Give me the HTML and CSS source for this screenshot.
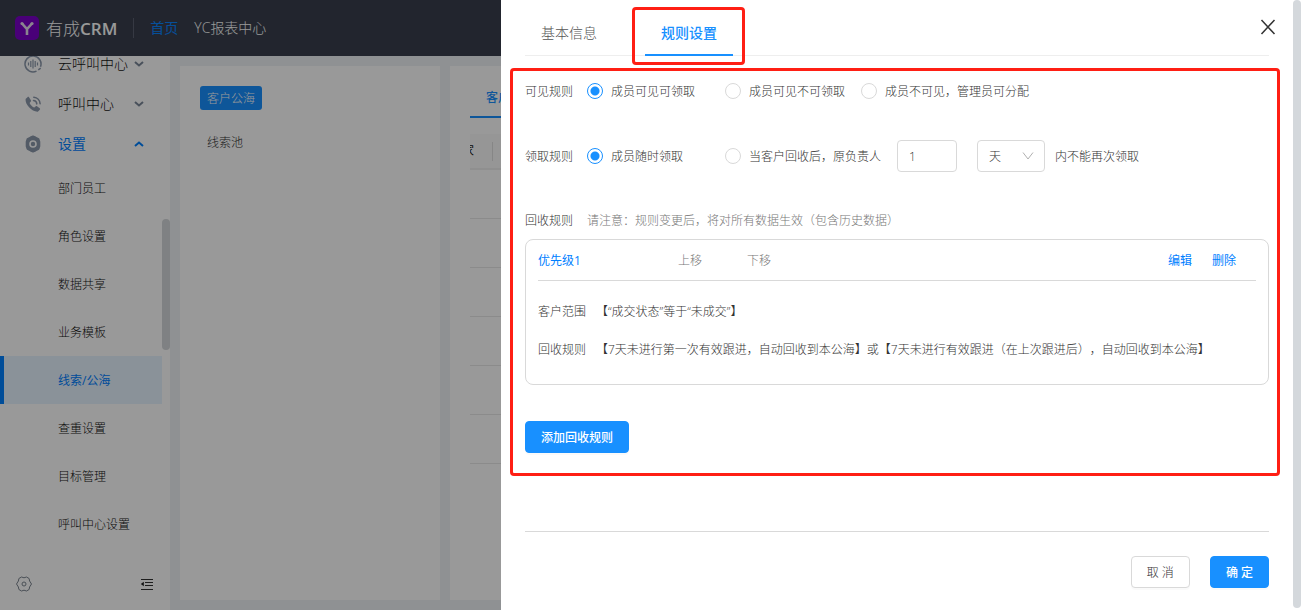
FILE: index.html
```html
<!DOCTYPE html>
<html lang="zh-CN">
<head>
<meta charset="utf-8">
<title>有成CRM</title>
<link rel="stylesheet" href="styles.css">
</head>
<body>
<div class="app">
  <header class="topbar">
    <svg class="logo" viewBox="0 0 24 24" width="24" height="24" aria-hidden="true"><rect width="24" height="24" rx="5" fill="#7a00c8"/><path d="M7 7.500l5 5.500 5-5.500M12 13v6" fill="none" stroke="#e6dcef" stroke-width="2.600"/><circle cx="7" cy="7.500" r="1.600" fill="#e6dcef"/><circle cx="17" cy="7.500" r="1.600" fill="#e6dcef"/></svg>
    <span class="brand">有成<b>CRM</b></span>
    <nav class="topnav">
      <a class="topnav-link is-active" href="#">首页</a>
      <a class="topnav-link" href="#">YC报表中心</a>
    </nav>
  </header>
  <div class="body">
    <aside class="sidebar">
      <nav class="menu">
        <a class="menu-item" href="#">
          <svg class="menu-icon" viewBox="0 0 18 18" width="18" height="18" fill="none" stroke="#8b98ab" stroke-width="1.500"><path d="M12.500 16.200A8 8 0 1 1 16.500 11.800M14.300 14.800l2.400-1.600"/><path d="M4.500 7.500v3M6.800 6v6M9 4.500v9M11.200 6v6M13.500 7.500v3" stroke-width="1.200"/></svg>
          <span>云呼叫中心</span>
          <svg class="chevron" viewBox="0 0 10 6" width="10" height="6"><path d="M1 1l4 3.500L9 1"/></svg>
        </a>
        <a class="menu-item" href="#">
          <svg class="menu-icon" viewBox="0 0 18 18" width="18" height="18"><path d="M3.500 2.200L1.600 4.100C.8 9.500 8 17 13.800 16.700l2-2c.5-.6.4-1-.1-1.400l-2.700-2c-.5-.3-1-.3-1.400.1l-1.300 1.200C8.500 11.900 6.400 9.700 5.600 7.900L6.800 6.600c.4-.5.4-.9.100-1.400L5 2.300c-.4-.6-1-.6-1.500-.1z" fill="#8b98ab"/><path d="M9.500 5.500a3.600 3.600 0 0 1 3.300 3.400M9.800 2.200a7 7 0 0 1 6.300 6.600" fill="none" stroke="#8b98ab" stroke-width="1.500" stroke-linecap="round"/></svg>
          <span>呼叫中心</span>
          <svg class="chevron" viewBox="0 0 10 6" width="10" height="6"><path d="M1 1l4 3.500L9 1"/></svg>
        </a>
        <a class="menu-item is-open" href="#">
          <svg class="menu-icon" viewBox="0 0 18 18" width="18" height="18"><path d="M6.500 2.500L9 1.500l2.500 1 3 1.700.8 2.600v4.400l-.8 2.600-3 1.700-2.500 1-2.500-1-3-1.700-.8-2.600V6.800l.8-2.600z" fill="#8b98ab" stroke="#8b98ab" stroke-width="2" stroke-linejoin="round"/><circle cx="9" cy="9" r="3" fill="none" stroke="#fff" stroke-width="1.600"/></svg>
          <span>设置</span>
          <svg class="chevron" viewBox="0 0 10 6" width="10" height="6"><path d="M1 5l4-3.500L9 5"/></svg>
        </a>
        <a class="submenu-item" href="#">部门员工</a>
        <a class="submenu-item" href="#">角色设置</a>
        <a class="submenu-item" href="#">数据共享</a>
        <a class="submenu-item" href="#">业务模板</a>
        <a class="submenu-item is-active" href="#">线索/公海</a>
        <a class="submenu-item" href="#">查重设置</a>
        <a class="submenu-item" href="#">目标管理</a>
        <a class="submenu-item" href="#">呼叫中心设置</a>
      </nav>
      <div class="sidebar-foot">
        <button class="icon-button" type="button" aria-label="设置"><svg viewBox="0 0 16 16" width="16" height="16" fill="none" stroke="#7c8590"><path d="M5.500 1l2.500.8L10.500 1l2.600 1.500.5 2.500L15.500 8l-1.900 3-.5 2.500L10.500 15 8 14.200 5.500 15l-2.600-1.500-.5-2.500L.5 8l1.900-3 .5-2.500z"/><circle cx="8" cy="8" r="2"/></svg></button>
        <button class="icon-button" type="button" aria-label="收起菜单"><svg viewBox="0 0 14 14" width="14" height="14"><path d="M1 2.500h12M5 5.500h8M5 8.500h8M1 12.500h12" stroke="#333" stroke-width="1.200"/><path d="M.8 7l3-2.300v4.600z" fill="#222"/></svg></button>
      </div>
      <div class="sidebar-scroll"></div>
    </aside>
    <main class="content">
      <section class="panel pools">
        <a class="pool is-active" href="#">客户公海</a>
        <a class="pool" href="#">线索池</a>
      </section>
      <section class="panel records">
        <div class="records-tabs"><a class="records-tab" href="#">客户公海</a></div>
        <table class="records-table">
          <thead><tr><th class="col-first"><span class="clipped">家</span></th><th></th></tr></thead>
          <tbody>
            <tr><td></td><td></td></tr><tr><td></td><td></td></tr><tr><td></td><td></td></tr>
            <tr><td></td><td></td></tr><tr><td></td><td></td></tr><tr><td></td><td></td></tr>
          </tbody>
        </table>
      </section>
    </main>
  </div>
</div>
<div class="mask"></div>
<div class="drawer" role="dialog" aria-label="规则设置">
  <div class="tabs" role="tablist">
    <button class="tab" type="button" role="tab">基本信息</button>
    <button class="tab is-active" type="button" role="tab" aria-selected="true">规则设置</button>
    <button class="close" type="button" aria-label="关闭"><svg viewBox="0 0 16 16" width="16" height="16"><path d="M1.500 1l13 14M14.500 1l-13 14" stroke="#333" stroke-width="1.500"/></svg></button>
  </div>
  <form class="rules">
    <div class="rule-row">
      <span class="rule-label">可见规则</span>
      <label class="option option-first"><input class="radio" type="radio" name="visible" checked><span class="option-text">成员可见可领取</span></label>
      <label class="option"><input class="radio" type="radio" name="visible"><span class="option-text">成员可见不可领取</span></label>
      <label class="option"><input class="radio" type="radio" name="visible"><span class="option-text">成员不可见，管理员可分配</span></label>
    </div>
    <div class="rule-row">
      <span class="rule-label">领取规则</span>
      <label class="option option-first"><input class="radio" type="radio" name="claim" checked><span class="option-text">成员随时领取</span></label>
      <label class="option"><input class="radio" type="radio" name="claim"><span class="option-text">当客户回收后，原负责人</span></label>
      <input class="number" type="text" value="1" aria-label="时长">
      <span class="select-wrap">
        <select class="select" aria-label="时间单位"><option>天</option></select>
        <svg class="select-arrow" viewBox="0 0 12 8" width="12" height="8"><path d="M1 .5l5 6.500 5-6.500" fill="none" stroke="#b0b0b0"/></svg>
      </span>
      <span class="option-text">内不能再次领取</span>
    </div>
    <div class="rule-row recycle-row">
      <span class="rule-label">回收规则</span>
      <span class="hint">请注意：规则变更后，将对所有数据生效（包含历史数据）</span>
    </div>
    <section class="card">
      <div class="card-head">
        <span class="priority">优先级1</span>
        <button class="text-button" type="button">上移</button>
        <button class="text-button" type="button">下移</button>
        <span class="card-actions">
          <button class="link-button" type="button">编辑</button>
          <button class="link-button" type="button">删除</button>
        </span>
      </div>
      <div class="card-body">
        <div class="detail"><span class="detail-label">客户范围</span><span>【“成交状态”等于“未成交”】</span></div>
        <div class="detail"><span class="detail-label">回收规则</span><span>【7天未进行第一次有效跟进，自动回收到本公海】或【7天未进行有效跟进（在上次跟进后），自动回收到本公海】</span></div>
      </div>
    </section>
    <button class="button primary add" type="button">添加回收规则</button>
  </form>
  <footer class="drawer-foot">
    <button class="button" type="button">取 消</button>
    <button class="button primary" type="button">确 定</button>
  </footer>
  <div class="drawer-scroll"></div>
</div>
</body>
</html>
```

FILE: styles.css
```css
* { box-sizing: border-box; }
body {
  margin: 0;
  font: 12px/20px "Open Sans", "Noto Sans CJK SC", sans-serif;
  font-weight: 300;
  color: #333;
  overflow: hidden;
}
a { color: inherit; text-decoration: none; }
button, input, select { font: inherit; color: inherit; margin: 0; }
button { padding: 0; border: 0; background: none; cursor: pointer; }
svg { display: block; flex: none; }

.app { height: 100vh; display: flex; flex-direction: column; background: #eff2f6; }
.topbar { flex: none; height: 56px; padding-left: 15px; display: flex; align-items: center; background: #393f4e; color: #fff; }
.brand { margin-left: 7px; padding-top: 2px; font-size: 17px; font-weight: 300; }
.brand b { font-weight: 600; }
.topnav { margin-left: 16px; padding-left: 16px; display: flex; gap: 16px; border-left: 1px solid #5a6070; font-size: 14px; }
.topnav-link.is-active { color: #0a84ff; font-weight: 400; }

.body { flex: 1; min-height: 0; display: flex; }
.sidebar { position: relative; width: 170px; flex: none; display: flex; flex-direction: column; background: #fff; color: #111; }
.menu { flex: 1; min-height: 0; overflow: hidden; display: flex; flex-direction: column; justify-content: flex-end; }
.menu-item { flex: none; height: 40px; padding: 0 26px 0 24px; display: flex; align-items: center; font-size: 14px; }
.menu-icon { margin-right: 16px; }
.chevron { margin-left: auto; fill: none; stroke: #7b8798; stroke-width: 2; }
.menu-item.is-open { color: #0080ff; font-weight: 400; }
.is-open .chevron { stroke: #0080ff; }
.submenu-item { flex: none; height: 48px; margin-right: 8px; padding: 2px 0 0 54px; border-left: 4px solid transparent; display: flex; align-items: center; }
.submenu-item.is-active { border-color: #0080ff; background: #e6f3ff; color: #0080ff; font-weight: 400; }
.sidebar-foot { height: 62px; padding: 10px 16px 0; display: flex; justify-content: space-between; align-items: center; }
.sidebar-scroll { position: absolute; right: 0; top: 163px; width: 8px; height: 131px; border-radius: 4px; background: #d4d7da; }

.content { flex: 1; min-width: 0; padding: 10px; display: flex; gap: 10px; }
.panel { background: #fff; padding: 20px; }
.pools { width: 260px; display: flex; flex-direction: column; align-items: flex-start; gap: 20px; }
.pool { padding: 3px 7px 1px; border-radius: 3px; }
.pool.is-active { background: #1890ff; color: #fff; }
.records { flex: 1; padding-right: 0; }
.records-tabs { height: 32px; display: flex; }
.records-tab { padding: 2px 16px 0; border-bottom: 2px solid #1890ff; color: #1890ff; font-weight: 500; }
.records-table { width: 100%; margin-top: 16px; border-collapse: collapse; table-layout: fixed; }
.records-table th { height: 35px; padding: 0; background: #fafafa; border-bottom: 2px solid #eee; font-weight: 400; color: #111; }
.records-table td { height: 49px; padding: 0; border-bottom: 1px solid #e8e8e8; }
.records-table .col-first { width: 23px; background: linear-gradient(#e0e0e0, #e0e0e0) right center / 1px 19px no-repeat #fafafa; }
.clipped { width: 4px; overflow: hidden; display: flex; justify-content: flex-end; }

.mask { position: fixed; inset: 0; background: rgba(0, 0, 0, .4); }

.drawer { position: fixed; top: 0; right: 0; bottom: 0; width: 800px; max-width: 100%; padding: 0 32px 22px 24px; display: flex; flex-direction: column; background: #fff; }
.drawer-scroll { position: absolute; top: 0; right: 0; bottom: 2px; width: 8px; border-radius: 4px; background: #d4d8dc; }
.tabs { position: relative; flex: none; height: 56px; display: flex; gap: 32px; border-bottom: 1px solid #eee; font-size: 14px; }
.tab { position: relative; margin-bottom: -1px; padding: 12px 16px 0; border-bottom: 2px solid transparent; color: #555; }
.tab.is-active { border-color: #1890ff; color: #1890ff; font-weight: 500; }
.tab.is-active::after { content: ""; position: absolute; inset: 7px -12px -11px -13px; border: 3px solid #ff1f14; border-radius: 4px; pointer-events: none; }
.close { position: absolute; right: -7px; top: 19px; }

.rules { position: relative; padding-top: 19px; }
.rules::before { content: ""; position: absolute; inset: 12px -11px -23px -15px; border: 3px solid #ff1f14; border-radius: 4px; pointer-events: none; }
.rule-row { height: 32px; margin-bottom: 32px; display: flex; align-items: center; }
.rule-row + .rule-row { height: 34px; }
.rule-label { width: 62px; padding-top: 1px; }
.option { margin-right: 16px; display: flex; align-items: center; gap: 8px; }
.option-first { width: 138px; margin-right: 0; }
.option-text { padding-top: 2px; }
.radio { appearance: none; width: 16px; height: 16px; border: 1px solid #d9d9d9; border-radius: 50%; background: #fff; }
.radio:checked { border-color: #1890ff; background: radial-gradient(circle, #1890ff 4px, #fff 5px); }
.number, .select { height: 32px; border: 1px solid #d9d9d9; border-radius: 4px; background: #fff; padding: 1px 11px 0; }
.number { width: 60px; }
.select-wrap { position: relative; margin: 0 10px 0 20px; }
.select { width: 68px; display: block; appearance: none; }
.select-arrow { position: absolute; right: 11px; top: 12px; pointer-events: none; }
.rule-row.recycle-row { height: 30px; margin-bottom: 4px; }
.hint { padding-top: 1px; color: #777; }

.card { padding: 0 12px 24px; border: 1px solid #d9d9d9; border-radius: 8px; }
.card-head { height: 41px; padding-top: 2px; display: flex; align-items: center; border-bottom: 1px solid #d9d9d9; }
.priority { width: 140px; color: #0080ff; font-weight: 400; }
.text-button { margin-right: 45px; color: #777; }
.card-actions { margin-left: auto; margin-right: 20px; display: flex; gap: 20px; }
.link-button { color: #0080ff; font-weight: 400; }
.card-body { padding-top: 21px; display: flex; flex-direction: column; gap: 18px; }
.detail { display: flex; text-spacing-trim: space-all; }
.detail-label { width: 58px; flex: none; }

.button { height: 32px; padding: 1px 15px 0; border: 1px solid #d9d9d9; border-radius: 4px; background: #fff; box-shadow: 0 2px 0 rgba(0, 0, 0, .02); }
.button.primary { border-color: #1890ff; background: #1890ff; color: #fff; font-weight: 500; }
.add { margin-top: 36px; }
.drawer-foot { margin-top: auto; padding-top: 24px; border-top: 1px solid #d9d9d9; display: flex; justify-content: flex-end; gap: 20px; }
```
